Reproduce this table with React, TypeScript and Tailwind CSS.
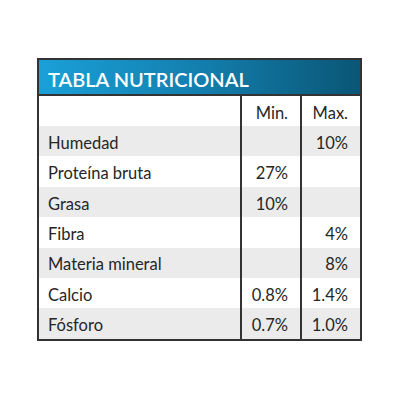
import React from 'react';

type Row = { label: string; min: string; max: string };

const rows: Row[] = [
  { label: 'Humedad', min: '', max: '10%' },
  { label: 'Proteína bruta', min: '27%', max: '' },
  { label: 'Grasa', min: '10%', max: '' },
  { label: 'Fibra', min: '', max: '4%' },
  { label: 'Materia mineral', min: '', max: '8%' },
  { label: 'Calcio', min: '0.8%', max: '1.4%' },
  { label: 'Fósforo', min: '0.7%', max: '1.0%' },
];

const App: React.FC = () => {
  return (
    <div className="w-[400px] h-[400px] bg-white pt-[58px] pl-[37px]" style={{ fontFamily: 'Lato, "Open Sans", sans-serif' }}>
      <div className="w-[325px] border-2 border-[#333]">
        <div className="h-[36px] border-b-2 border-[#333] bg-gradient-to-r from-[#1aa0d8] via-[#137fae] to-[#0a5676] flex items-center pl-[9px] pt-[3px]">
          <span className="text-white text-[20px] font-semibold">TABLA NUTRICIONAL</span>
        </div>
        <div className="grid grid-cols-[201px_60px_60px] text-[16.5px] text-[#262626]">
          <div className="h-[30px]" />
          <div className="h-[30px] border-l-2 border-[#333] flex items-center justify-end pr-[12px] pt-[4px]">Min.</div>
          <div className="h-[30px] border-l-2 border-[#333] flex items-center justify-end pr-[12px] pt-[4px]">Max.</div>
          {rows.map((r, i) => {
            const bg = i % 2 === 0 ? 'bg-[#ebebeb]' : 'bg-white';
            return (
              <React.Fragment key={r.label}>
                <div className={`h-[30.4px] ${bg} flex items-center pl-[9px] pt-[4px]`}>{r.label}</div>
                <div className={`h-[30.4px] ${bg} border-l-2 border-[#333] flex items-center justify-end pr-[12px] pt-[4px]`}>{r.min}</div>
                <div className={`h-[30.4px] ${bg} border-l-2 border-[#333] flex items-center justify-end pr-[12px] pt-[4px]`}>{r.max}</div>
              </React.Fragment>
            );
          })}
        </div>
      </div>
    </div>
  );
};

export default App;
